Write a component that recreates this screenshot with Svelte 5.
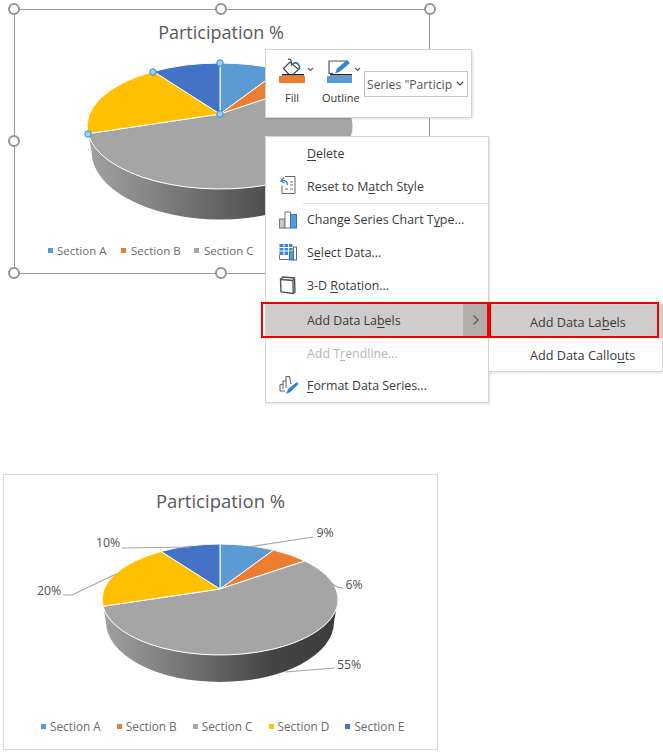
<script>
    // boundary angles of the slices on the top ellipse, in degrees (y pointing down)
    const slices = [
        { name: 'Section A', color: '#5b9bd5', from: -90, to: -63 },
        { name: 'Section B', color: '#ed7d31', from: -63, to: -44 },
        { name: 'Section C', color: '#a5a5a5', from: -44, to: 173 },
        { name: 'Section D', color: '#ffc000', from: 173, to: 240 },
        { name: 'Section E', color: '#4472c4', from: 240, to: 270 }
    ];

    const topPie = { cx: 220, cy: 126, rx: 133, ry: 63, hubY: 114, baseCy: 151.5, baseRx: 128.5, baseRy: 68 };
    const lowPie = { cx: 220, cy: 86.5, rx: 118, ry: 55.5, hubY: 76, baseCy: 109, baseRx: 114, baseRy: 60 };

    function pt(p, deg) {
        const a = (deg * Math.PI) / 180;
        return [p.cx + p.rx * Math.cos(a), p.cy + p.ry * Math.sin(a)];
    }

    function slicePath(p, s) {
        const [x1, y1] = pt(p, s.from);
        const [x2, y2] = pt(p, s.to);
        const large = s.to - s.from > 180 ? 1 : 0;
        return `M${p.cx} ${p.hubY}L${x1} ${y1}A${p.rx} ${p.ry} 0 ${large} 1 ${x2} ${y2}Z`;
    }

    function sidePath(p) {
        const r = p.cx + p.rx, l = p.cx - p.rx;
        const br = p.cx + p.baseRx, bl = p.cx - p.baseRx;
        return `M${r} ${p.cy}A${p.rx} ${p.ry} 0 0 1 ${l} ${p.cy}L${bl} ${p.baseCy}A${p.baseRx} ${p.baseRy} 0 0 0 ${br} ${p.baseCy}Z`;
    }

    const topHandles = [[88, 134], [153, 72], [220, 63], [220, 114]];

    const handles = [
        { x: 0, y: 0 }, { x: 207, y: 0 }, { x: 416, y: 0 },
        { x: 0, y: 132 },
        { x: 0, y: 264 }, { x: 207, y: 264 }
    ];

    // data labels of the lower chart, with their leader lines
    const dataLabels = [
        { text: '9%', x: 325, y: 63, line: '248,77 313,67' },
        { text: '10%', x: 108, y: 73, line: '122,78 190,77' },
        { text: '20%', x: 49, y: 121, line: '63,125 72,125 116,104' },
        { text: '6%', x: 354, y: 115, line: '303,93 337,117 343,118' },
        { text: '55%', x: 349, y: 195, line: '285,202 335,198' }
    ];
</script>

<div class="page">
    <section class="upper">
        <div class="chart-frame">
            {#each handles as h}
                <span class="handle" style="left: {h.x}px; top: {h.y}px"></span>
            {/each}
        </div>

        <svg class="upper-pie" width="440" height="285" viewBox="0 0 440 285">
            <defs>
                <linearGradient id="sideTop" gradientUnits="userSpaceOnUse" x1="87" x2="353" y1="0" y2="0">
                    <stop offset="0" stop-color="#a2a2a2" />
                    <stop offset="0.75" stop-color="#444444" />
                    <stop offset="1" stop-color="#3c3c3c" />
                </linearGradient>
            </defs>
            <path d={sidePath(topPie)} fill="url(#sideTop)" />
            {#each slices as s}
                <path d={slicePath(topPie, s)} fill={s.color} stroke="#fff" stroke-width="1" stroke-linejoin="round" />
            {/each}
            {#each topHandles as [x, y]}
                <circle cx={x} cy={y} r="3.2" fill="#9dd0f5" stroke="#2e8fd8" stroke-width="1" />
            {/each}
            <text class="chart-title" x="221" y="39" text-anchor="middle">Participation %</text>
            <g class="legend-text">
                <rect x="48" y="248" width="5" height="5" fill="#5b9bd5" />
                <text x="57" y="255">Section A</text>
                <rect x="121" y="248" width="5" height="5" fill="#ed7d31" />
                <text x="131" y="255">Section B</text>
                <rect x="194" y="248" width="5" height="5" fill="#a5a5a5" />
                <text x="204" y="255">Section C</text>
            </g>
        </svg>

        <div class="toolbar">
            <div class="tool">
                <div class="tool-icon">
                    <svg width="40" height="27" viewBox="0 0 40 27">
                        <path d="M8.5 11.5L15 5l8.5 7.5-5.5 5h-4z" fill="#fff" stroke="#444" stroke-width="1.2" />
                        <path d="M13 2.5c2-1 3 0 3.5 3v3" fill="none" stroke="#444" stroke-width="1.1" />
                        <path d="M18 6.5c4-2 7 1 6.5 6" fill="none" stroke="#2e75b6" stroke-width="1.8" />
                        <rect x="7" y="17" width="22" height="1.5" fill="#222" />
                        <rect x="4" y="19" width="26" height="7" fill="#ed7d31" />
                        <path d="M33 11l2.5 2.5L38 11" fill="none" stroke="#555" stroke-width="1.1" />
                    </svg>
                </div>
                <span>Fill</span>
            </div>
            <div class="tool">
                <div class="tool-icon">
                    <svg width="40" height="27" viewBox="0 0 40 27">
                        <path d="M11 16.5H7V4h18" fill="none" stroke="#555" stroke-width="1.2" />
                        <path d="M13 16.5l2-5 10-8.5 3 3-10 8.5z" fill="#2e86d4" />
                        <rect x="8" y="17" width="22" height="1.5" fill="#222" />
                        <rect x="5" y="19" width="25" height="7" fill="#5b9bd5" />
                        <path d="M33 11l2.5 2.5L38 11" fill="none" stroke="#555" stroke-width="1.1" />
                    </svg>
                </div>
                <span>Outline</span>
            </div>
            <div class="series-select">
                <span>Series "Particip</span>
                <svg width="8" height="6" viewBox="0 0 8 6"><path d="M1 1l3 3 3-3" fill="none" stroke="#444" stroke-width="1.2" /></svg>
            </div>
        </div>

        <ul class="menu">
            <li><span class="ico"></span><span><u>D</u>elete</span></li>
            <li class="with-sep">
                <span class="ico">
                    <svg width="20" height="20" viewBox="0 0 20 20">
                        <path d="M6 0.5h10v17H3v-8" fill="#fff" stroke="#666" stroke-width="1" />
                        <path d="M6 13h3M11 13h3M11 6h3M11 9h3" stroke="#777" stroke-width="1.2" />
                        <path d="M8.5 9c0-4-3-5-6-4M5 1.5L2 5l3.5 2" fill="none" stroke="#2e86d4" stroke-width="1.3" />
                    </svg>
                </span>
                <span>Reset to M<u>a</u>tch Style</span>
            </li>
            <li>
                <span class="ico">
                    <svg width="20" height="20" viewBox="0 0 20 20">
                        <rect x="0.5" y="9" width="5.5" height="9" fill="#c8c8c8" stroke="#777" />
                        <rect x="6" y="2" width="5.5" height="16" fill="#fff" stroke="#777" />
                        <rect x="11.5" y="4.5" width="6" height="13.5" fill="#5b9bd5" stroke="#2e75b6" />
                    </svg>
                </span>
                <span>Change Series Chart T<u>y</u>pe...</span>
            </li>
            <li>
                <span class="ico">
                    <svg width="20" height="20" viewBox="0 0 20 20">
                        <rect x="0.5" y="1" width="13" height="11" fill="#3d85d0" />
                        <path d="M.5 4.5h13M.5 8h13M5 1v11M9.5 1v11" stroke="#fff" stroke-width="1" />
                        <path d="M.5 12v4.5H11" fill="none" stroke="#777" stroke-width="1" />
                        <rect x="14.5" y="4" width="3" height="13" fill="#fff" stroke="#666" />
                        <rect x="10.5" y="9" width="4" height="8" fill="#5b9bd5" stroke="#2e75b6" />
                    </svg>
                </span>
                <span>S<u>e</u>lect Data...</span>
            </li>
            <li>
                <span class="ico">
                    <svg width="20" height="20" viewBox="0 0 20 20">
                        <path d="M1.5 3L4 1l11.5 1 .5 14-2 1.5-12-1.5z" fill="#fff" stroke="#555" stroke-width="1.4" />
                        <path d="M2 3.5l12 1 .2 12.5M14 4.5l1.5-2.5" fill="none" stroke="#555" stroke-width="1.4" />
                    </svg>
                </span>
                <span>3-D <u>R</u>otation...</span>
            </li>
            <li class="active">
                <span class="ico"></span>
                <span class="grow">Add Data La<u>b</u>els</span>
                <span class="arrow">
                    <svg width="8" height="12" viewBox="0 0 8 12"><path d="M1.5 1.5L6 6l-4.5 4.5" fill="none" stroke="#555" stroke-width="1.1" /></svg>
                </span>
            </li>
            <li class="disabled"><span class="ico"></span><span>Add T<u>r</u>endline...</span></li>
            <li>
                <span class="ico">
                    <svg width="20" height="20" viewBox="0 0 20 20">
                        <path d="M1 15V9l3-1V5h3V0.5h3.5L12 8" fill="none" stroke="#666" stroke-width="1.1" />
                        <path d="M1 15h5M4 8v5M7 5v7" fill="none" stroke="#666" stroke-width="1" />
                        <path d="M7 18l2-5 9-7 1.5 2-8 8z" fill="#2e86d4" />
                    </svg>
                </span>
                <span><u>F</u>ormat Data Series...</span>
            </li>
        </ul>

        <ul class="submenu">
            <li class="active">Add Data La<u>b</u>els</li>
            <li>Add Data Callo<u>u</u>ts</li>
        </ul>

        <div class="red-box first"></div>
        <div class="red-box second"></div>
    </section>

    <section class="lower">
        <h3>Participation %</h3>
        <svg class="lower-pie" width="432" height="196" viewBox="0 0 432 196">
            <defs>
                <linearGradient id="sideLow" gradientUnits="userSpaceOnUse" x1="102" x2="338" y1="0" y2="0">
                    <stop offset="0" stop-color="#a2a2a2" />
                    <stop offset="0.72" stop-color="#444444" />
                    <stop offset="1" stop-color="#3c3c3c" />
                </linearGradient>
            </defs>
            <g transform="translate(-4 0)">
                <path d={sidePath(lowPie)} fill="url(#sideLow)" />
                {#each slices as s}
                    <path d={slicePath(lowPie, s)} fill={s.color} stroke="#fff" stroke-width="1" stroke-linejoin="round" />
                {/each}
                <g transform="translate(0 -43)">
                    {#each dataLabels as d}
                        <polyline points={d.line} fill="none" stroke="#a6a6a6" stroke-width="1.2" />
                        <text class="data-label" x={d.x} y={d.y + 4} text-anchor="middle">{d.text}</text>
                    {/each}
                </g>
            </g>
        </svg>
        <div class="legend">
            {#each slices as s}
                <span class="legend-item"><i style="background: {s.color}"></i>{s.name}</span>
            {/each}
        </div>
    </section>
</div>

<style>
    :global(body) {
        margin: 0;
        background: #fff;
        font-family: 'Open Sans', 'Noto Sans', sans-serif;
        color: #444;
    }

    .page {
        width: 663px;
        height: 752px;
        overflow: hidden;
        position: relative;
    }

    .upper {
        position: relative;
        height: 474px;
    }

    .chart-frame {
        position: absolute;
        left: 14px;
        top: 9px;
        width: 416px;
        height: 265px;
        box-sizing: border-box;
        border: 1.5px solid #9a9a9a;
    }

    .handle {
        position: absolute;
        width: 8px;
        height: 8px;
        margin: -7.5px 0 0 -7.5px;
        border: 2px solid #949494;
        border-radius: 50%;
        background: #fff;
    }

    .upper-pie {
        position: absolute;
        left: 0;
        top: 0;
    }

    .chart-title {
        font-size: 18px;
        fill: #595959;
    }

    .legend-text text {
        font-size: 11.5px;
        fill: #6b6b6b;
    }

    .toolbar {
        position: absolute;
        left: 265px;
        top: 49px;
        width: 207px;
        height: 69px;
        box-sizing: border-box;
        display: flex;
        padding: 7px 0 0 9px;
        background: #fff;
        border: 1px solid #d4d4d4;
        box-shadow: 1px 1px 2px rgba(0, 0, 0, 0.12);
    }

    .tool {
        width: 47px;
        display: flex;
        flex-direction: column;
        align-items: flex-start;
        font-size: 11px;
        color: #333;
    }

    .tool span {
        width: 34px;
        margin-top: 6px;
        text-align: center;
        white-space: nowrap;
    }

    .tool-icon {
        height: 27px;
    }

    .series-select {
        align-self: flex-start;
        box-sizing: border-box;
        width: 104px;
        height: 26px;
        margin: 14px 0 0 -5px;
        padding: 0 3px 0 2px;
        display: flex;
        align-items: center;
        justify-content: space-between;
        border: 1px solid #c4c4c4;
        font-size: 12.2px;
        color: #555;
        white-space: nowrap;
    }

    .menu,
    .submenu {
        position: absolute;
        margin: 0;
        padding: 0;
        list-style: none;
        box-sizing: border-box;
        background: #fff;
        border: 1px solid #d4d4d4;
        box-shadow: 1px 1px 2px rgba(0, 0, 0, 0.12);
        font-size: 12.4px;
        color: #3a3a3a;
    }

    .menu {
        left: 265px;
        top: 136px;
        width: 224px;
        height: 267px;
        display: flex;
        flex-direction: column;
    }

    .menu li {
        height: 32.8px;
        display: flex;
        align-items: center;
        flex: none;
        position: relative;
    }

    .menu .ico {
        width: 41px;
        padding-left: 13px;
        box-sizing: border-box;
        height: 20px;
        display: block;
        flex: none;
    }

    .menu .with-sep {
        margin-bottom: 1px;
    }

    .with-sep::after {
        content: '';
        position: absolute;
        left: 37px;
        right: 0;
        bottom: -1px;
        height: 1px;
        background: #e1e1e1;
    }

    .menu .active {
        background: #cfcdcb;
        align-items: stretch;
        margin-top: 2px;
    }

    .menu .active > span {
        align-self: center;
    }

    .menu .active .grow {
        flex: 1;
    }

    .menu .active .arrow {
        align-self: stretch;
        width: 25px;
        display: flex;
        align-items: center;
        justify-content: center;
        background: #b3b0ac;
    }

    .disabled {
        color: #b4b4b4;
    }

    .submenu {
        left: 488px;
        top: 304px;
        width: 175px;
        height: 68px;
        display: flex;
        flex-direction: column;
        font-size: 12.7px;
    }

    .submenu li {
        height: 33px;
        padding-left: 41px;
        display: flex;
        align-items: center;
        white-space: pre;
    }

    .submenu .active {
        background: #cfcdcb;
    }

    u {
        text-underline-offset: 2px;
    }

    .red-box {
        position: absolute;
        top: 302px;
        height: 36px;
        box-sizing: border-box;
        border: 2px solid #f00000;
    }

    .first {
        left: 261px;
        width: 228px;
    }

    .second {
        left: 489px;
        width: 170px;
    }

    .lower {
        box-sizing: border-box;
        width: 435px;
        height: 276px;
        margin-left: 3px;
        border: 1px solid #d9d9d9;
        display: flex;
        flex-direction: column;
        align-items: stretch;
    }

    h3 {
        margin: 13px 0 0;
        height: 25px;
        line-height: 25px;
        font-size: 18.5px;
        font-weight: 400;
        text-align: center;
        color: #595959;
    }

    .lower-pie {
        display: block;
        overflow: visible;
    }

    .data-label {
        font-size: 12.3px;
        fill: #505050;
    }

    .legend {
        display: flex;
        margin-top: 9px;
        padding-left: 37px;
        gap: 16px;
        font-size: 11.8px;
        color: #6b6b6b;
    }

    .legend-item {
        display: flex;
        align-items: center;
        gap: 4px;
        white-space: nowrap;
    }

    .legend-item i {
        width: 5px;
        height: 5px;
        display: block;
    }
</style>
